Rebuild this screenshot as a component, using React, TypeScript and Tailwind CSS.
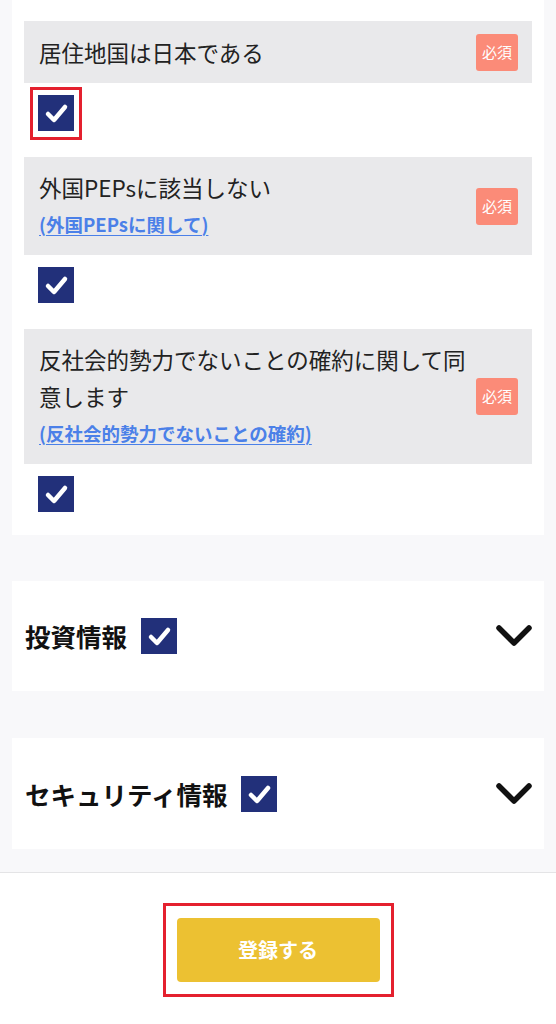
import React from "react";

type Agreement = {
  title: string;
  link?: string;
  highlighted?: boolean;
};

const agreements: Agreement[] = [
  { title: "居住地国は日本である", highlighted: true },
  { title: "外国PEPsに該当しない", link: "(外国PEPsに関して)" },
  {
    title: "反社会的勢力でないことの確約に関して同意します",
    link: "(反社会的勢力でないことの確約)",
  },
];

const CheckBox = () => (
  <span className="flex h-[36px] w-[36px] shrink-0 items-center justify-center bg-[#22307a]">
    <svg width="36" height="36" viewBox="0 0 36 36" fill="none">
      <polyline
        points="10,19 16,25 27,12"
        stroke="#fff"
        strokeWidth="4.5"
        strokeLinecap="round"
        strokeLinejoin="round"
      />
    </svg>
  </span>
);

const Chevron = () => (
  <svg width="38" height="26" viewBox="0 0 38 26" fill="none">
    <polyline
      points="4,5 19,20 34,5"
      stroke="#111"
      strokeWidth="5.5"
      strokeLinecap="round"
      strokeLinejoin="round"
    />
  </svg>
);

const Section = ({ label, className }: { label: string; className: string }) => (
  <div className={`flex items-center justify-between bg-white pl-[13px] pr-[11px] ${className}`}>
    <div className="flex items-center gap-[14px]">
      <h2 className="text-[25.5px] font-bold leading-none text-[#111]">{label}</h2>
      <CheckBox />
    </div>
    <Chevron />
  </div>
);

export default function App() {
  return (
    <div className="min-h-screen bg-[#f8f8fa] font-['Noto_Sans_CJK_JP','Noto_Sans',sans-serif]">
      <div className="px-3">
        {/* agreement list */}
        <div className="flex flex-col bg-white px-3 pt-[21px] pb-[23px]">
          {agreements.map((item, i) => (
            <div key={item.title} className={i > 0 ? "mt-[26px]" : ""}>
              <div className="flex min-h-[62px] items-center justify-between gap-1 bg-[#e9e9eb] py-[12px] pl-[15px] pr-[14px]">
                <div className="max-w-[433px]">
                  <p className="text-[22.5px] leading-[37px] text-[#222]">{item.title}</p>
                  {item.link && (
                    <a
                      href="#"
                      className="block text-[18.5px] font-semibold leading-[37px] text-[#4b80e8] underline underline-offset-[3px]"
                    >
                      {item.link}
                    </a>
                  )}
                </div>
                <span className="flex h-[37px] w-[42px] shrink-0 items-center justify-center rounded-[3px] bg-[#fb8b78] text-[15px] text-white">
                  必須
                </span>
              </div>
              <div className="mt-[12px] flex pl-[14px]">
                <div className="relative flex">
                  <CheckBox />
                  {item.highlighted && (
                    <span className="absolute -left-[8px] -right-[8px] -top-[8px] -bottom-[9px] border-[3px] border-[#e4202e]" />
                  )}
                </div>
              </div>
            </div>
          ))}
        </div>

        <Section label="投資情報" className="mt-[46px] h-[110px]" />
        <Section label="セキュリティ情報" className="mt-[47px] h-[111px]" />
        <div className="h-[23px]" />
      </div>

      {/* footer */}
      <div className="flex justify-center border-t border-[#e4e4e6] bg-white pt-[30px] pb-[40px]">
        <div className="border-[3px] border-[#e4202e] px-[11px] py-[12px]">
          <button className="h-[64px] w-[203px] rounded-[4px] bg-[#ecc132] text-[20px] font-bold text-white">
            登録する
          </button>
        </div>
      </div>
    </div>
  );
}
